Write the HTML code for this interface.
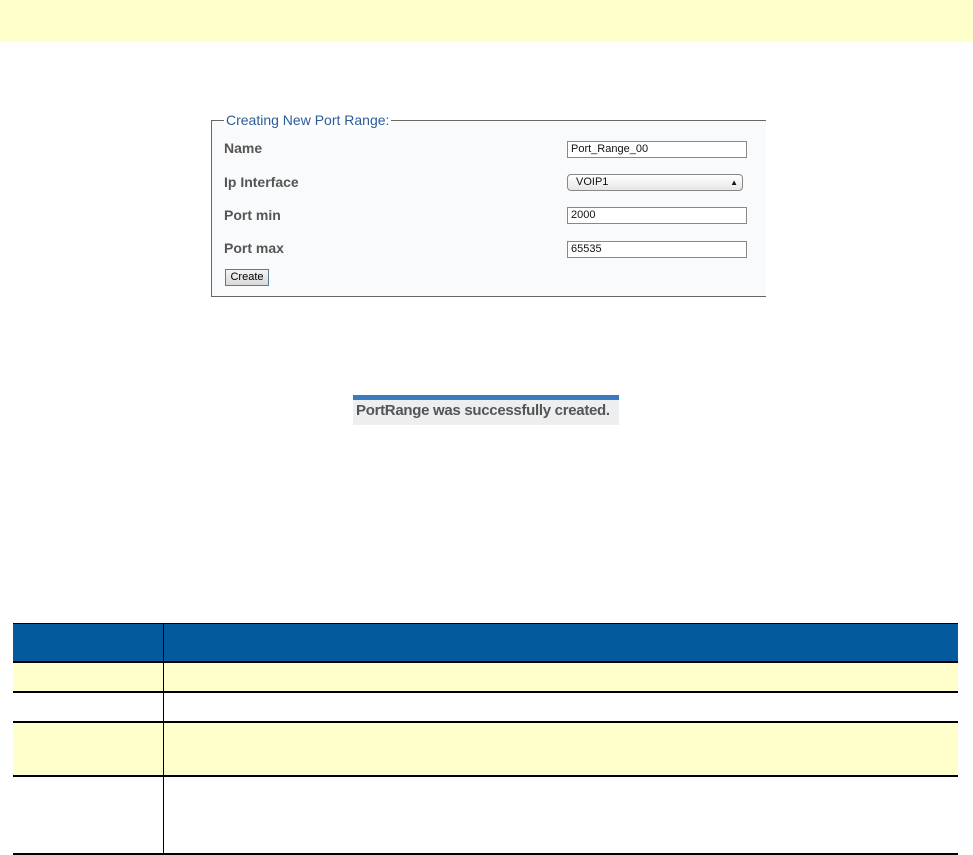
<!DOCTYPE html>
<html><head><style>
body{margin:0;width:973px;height:855px;background:#fff;position:relative;font-family:"Liberation Sans",sans-serif;overflow:hidden}
.a{position:absolute}
.lbl{position:absolute;left:224px;font-weight:bold;font-size:14px;color:#555}
.inp{position:absolute;left:567px;width:175px;height:15px;border:1px solid #888;background:#fff;font-size:11px;line-height:15px;padding-left:3px;box-sizing:content-box;color:#111}
.hl{position:absolute;left:13px;width:945px;height:2px;background:#000}
</style></head><body>
<div class="a" style="left:0;top:0;width:973px;height:42px;background:#ffffcc"></div>
<div class="a" style="left:211px;top:120px;width:554px;height:175px;border:1px solid #666;border-right:none;background:#f9fafb"></div>
<div class="a" style="left:224px;top:112px;background:#fff;padding:0 2px;font-size:14px;color:#2a5c9a">Creating New Port Range:</div>
<div class="lbl" style="top:140px">Name</div>
<div class="lbl" style="top:174px">Ip Interface</div>
<div class="lbl" style="top:207px">Port min</div>
<div class="lbl" style="top:240px">Port max</div>
<div class="inp" style="top:141px">Port_Range_00</div>
<div class="inp" style="top:174px;width:166px;border-radius:4px;background:linear-gradient(#fff,#e6e6e6);padding-left:8px">VOIP1<span style="position:absolute;right:4px;font-size:8px">&#9650;</span></div>
<div class="inp" style="top:207px">2000</div>
<div class="inp" style="top:241px">65535</div>
<div class="a" style="left:225px;top:269px;width:42px;height:15px;border:1px solid #5a7aa0;background:linear-gradient(#f4f4f4,#d8d8d8);font-size:11px;text-align:center;line-height:15px">Create</div>
<div class="a" style="left:353px;top:395px;width:266px;height:5px;background:#3a7cc0"></div>
<div class="a" style="left:353px;top:400px;width:266px;height:25px;background:#eceef0;font-size:15px;font-weight:bold;color:#555;line-height:22px;padding-left:3px;box-sizing:border-box;white-space:nowrap;letter-spacing:-0.3px">PortRange was successfully created.</div>
<div class="a" style="left:13px;top:624px;width:945px;height:38px;background:#035a9c"></div>
<div class="a" style="left:13px;top:662px;width:945px;height:30px;background:#ffffcc"></div>
<div class="a" style="left:13px;top:722px;width:945px;height:54px;background:#ffffcc"></div>
<div class="hl" style="top:623px;height:1px"></div>
<div class="hl" style="top:661px"></div>
<div class="hl" style="top:691px"></div>
<div class="hl" style="top:721px"></div>
<div class="hl" style="top:775px"></div>
<div class="hl" style="top:853px"></div>
<div class="a" style="left:163px;top:624px;width:1px;height:230px;background:#000"></div>
</body></html>
